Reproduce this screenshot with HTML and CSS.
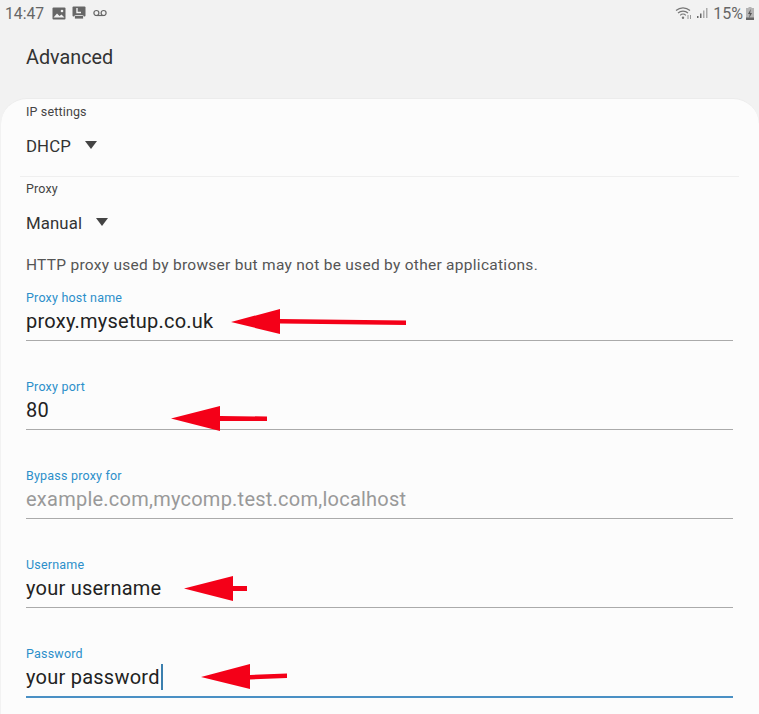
FILE: index.html
```html
<!DOCTYPE html>
<html lang="en">
<head>
<meta charset="utf-8">
<title>Advanced</title>
<link rel="stylesheet" href="styles.css">
</head>
<body>
<div class="status">
  <span class="time">14:47</span>
  <svg class="ic" width="14" height="13" viewBox="0 0 14 13"><rect x="0.5" y="0.5" width="13" height="12" rx="1" fill="#666"/><path d="M1.5 10.5 5 6.5l2.5 2.5 2-1.5 3 3z" fill="#f2f2f2"/><circle cx="10" cy="4" r="1.3" fill="#f2f2f2"/></svg>
  <svg class="ic ic2" width="14" height="14" viewBox="0 0 14 14"><rect x="0.5" y="0.5" width="13" height="10" rx="1" fill="#666"/><path d="M5 2v4.5h4" fill="none" stroke="#f2f2f2" stroke-width="1.4"/><path d="M2.5 13v-2.5a1 1 0 0 1 1-1h7a1 1 0 0 1 1 1V13z" fill="#666" stroke="#f2f2f2" stroke-width=".8"/></svg>
  <svg class="ic ic3" width="14" height="8" viewBox="0 0 14 8"><circle cx="3.4" cy="4" r="2.5" fill="none" stroke="#666" stroke-width="1.2"/><circle cx="10.6" cy="4" r="2.5" fill="none" stroke="#666" stroke-width="1.2"/><path d="M3.4 6.5h7.2" stroke="#666" stroke-width="1.2"/></svg>
  <span class="spacer"></span>
  <svg class="ic wifi" width="18" height="14" viewBox="0 0 18 14"><g fill="none" stroke="#777" stroke-width="1.1"><path d="M1 4.5a10.500 10.500 0 0 1 14 0"/><path d="M3 7a7.500 7.500 0 0 1 10 0"/><path d="M5.200 9.300a4 4 0 0 1 5.600 0"/></g><circle cx="8" cy="11.800" r="1.200" fill="#777"/><path d="M13 9v4M15.500 9v4" stroke="#999" stroke-width="1"/></svg>
  <svg class="ic sig" width="12" height="12" viewBox="0 0 12 12"><rect x="0" y="9" width="1.500" height="2" fill="#666"/><rect x="3" y="6.500" width="1.500" height="4.500" fill="#666"/><rect x="6" y="3.500" width="1.500" height="7.500" fill="#aaa"/><rect x="9" y="1" width="1.500" height="10" fill="#aaa"/></svg>
  <span class="pct">15%</span>
  <svg class="ic batt" width="8" height="13" viewBox="0 0 8 13"><path d="M2.500 0h3v1H8v12H0V1h2.500z" fill="#b5b5b5"/><rect y="10.500" width="8" height="2.500" fill="#666"/><path d="M4.800 2 2 7h1.800L3.200 11 6 6H4.200z" fill="#555"/></svg>
</div>

<h1 class="title">Advanced</h1>

<main class="card">
  <section class="select-row">
    <div class="caption">IP settings</div>
    <div class="select"><span>DHCP</span><i class="caret"></i></div>
  </section>
  <hr class="rule">
  <section class="select-row proxy">
    <div class="caption">Proxy</div>
    <div class="select"><span>Manual</span><i class="caret"></i></div>
  </section>
  <p class="note">HTTP proxy used by browser but may not be used by other applications.</p>

  <div class="field first">
    <label class="flabel">Proxy host name</label>
    <div class="value">proxy.mysetup.co.uk</div>
    <svg class="arrow a1" width="176" height="28" viewBox="0 0 176 28"><path d="M0 14 49 1V11L175 12.500V17L49 15.500V26z" fill="#f40018"/></svg>
  </div>
  <div class="field">
    <label class="flabel">Proxy port</label>
    <div class="value">80</div>
    <svg class="arrow a2" width="97" height="26" viewBox="0 0 97 26"><path d="M0 12.500 49 0V10L96 10.500V15L49 15V25z" fill="#f40018"/></svg>
  </div>
  <div class="field">
    <label class="flabel">Bypass proxy for</label>
    <div class="value hint">example.com,mycomp.test.com,localhost</div>
  </div>
  <div class="field">
    <label class="flabel">Username</label>
    <div class="value">your username</div>
    <svg class="arrow a3" width="64" height="26" viewBox="0 0 64 26"><path d="M0 12.500 49 0V10H63V15H49V25z" fill="#f40018"/></svg>
  </div>
  <div class="field active">
    <label class="flabel">Password</label>
    <div class="value">your password<i class="cursor"></i></div>
    <svg class="arrow a4" width="87" height="26" viewBox="0 0 87 26"><path d="M0 13 49 0V11L86 9.500V14L49 15.500V25z" fill="#f40018"/></svg>
  </div>
</main>
</body>
</html>
```
FILE: styles.css
```css
* { box-sizing: border-box; }
html, body { margin: 0; height: 100%; }
body {
  width: 759px;
  height: 714px;
  overflow: hidden;
  background: #f2f2f2;
  font-family: Roboto, "Liberation Sans", sans-serif;
  color: #222;
}
.status {
  display: flex;
  align-items: center;
  height: 26px;
  padding: 0 5px;
  color: #666;
}
.time { font-size: 15.700px; margin-right: 8px; }
.ic { display: block; flex: none; }
.ic2 { margin-left: 6px; }
.ic3 { margin-left: 7px; }
.spacer { flex: 1; }
.wifi { margin-right: 4px; }
.pct { font-size: 16px; margin: 0 3px 0 4px; }
.title {
  margin: 0;
  height: 72px;
  padding: 20px 0 0 26px;
  font-size: 19.800px;
  font-weight: 400;
  line-height: 24px;
  color: #333;
}
.card {
  height: 616px;
  margin-left: 1px;
  background: #fcfcfc;
  border-top: 1px solid #ececec;
  border-radius: 26px 26px 0 0;
  padding: 6px 25px 0;
}
.caption {
  font-size: 12.500px;
  letter-spacing: .15px;
  line-height: 14px;
  color: #444;
}
.select-row { height: 71px; }
.select {
  display: flex;
  align-items: center;
  gap: 14px;
  margin-top: 17px;
  font-size: 16.800px;
  letter-spacing: .1px;
  line-height: 20px;
  color: #333;
}
.caret {
  width: 0;
  height: 0;
  margin-top: -3px;
  border-left: 6px solid transparent;
  border-right: 6px solid transparent;
  border-top: 8px solid #444;
}
.rule {
  margin: 0 -5px 0 -6px;
  border: 0;
  border-top: 1px solid #efefef;
}
.proxy { height: 79px; padding-top: 5px; }
.note {
  margin: 0;
  font-size: 15.500px;
  letter-spacing: .28px;
  line-height: 18px;
  color: #555;
}
.field {
  position: relative;
  height: 89px;
  width: 707px;
  padding-top: 38px;
  border-bottom: 1px solid #aaa;
}
.field.first { height: 51px; padding-top: 0; margin-top: 16px; }
.field.active { border-bottom: 2px solid #4a90c4; height: 90px; }
.flabel {
  display: block;
  font-size: 12.500px;
  letter-spacing: .2px;
  line-height: 15px;
  color: #2c8fca;
}
.value {
  margin-top: 3px;
  font-size: 20px;
  letter-spacing: .24px;
  line-height: 26px;
  color: #222;
}
.hint { color: #999; }
.cursor {
  display: inline-block;
  width: 2px;
  height: 26px;
  margin-left: 1px;
  vertical-align: -6px;
  background: #3b7fae;
}
.arrow { position: absolute; display: block; }
.a1 { left: 205px; top: 18px; }
.a2 { left: 145px; top: 65px; }
.a3 { left: 158px; top: 57px; }
.a4 { left: 175px; top: 56px; }
```
